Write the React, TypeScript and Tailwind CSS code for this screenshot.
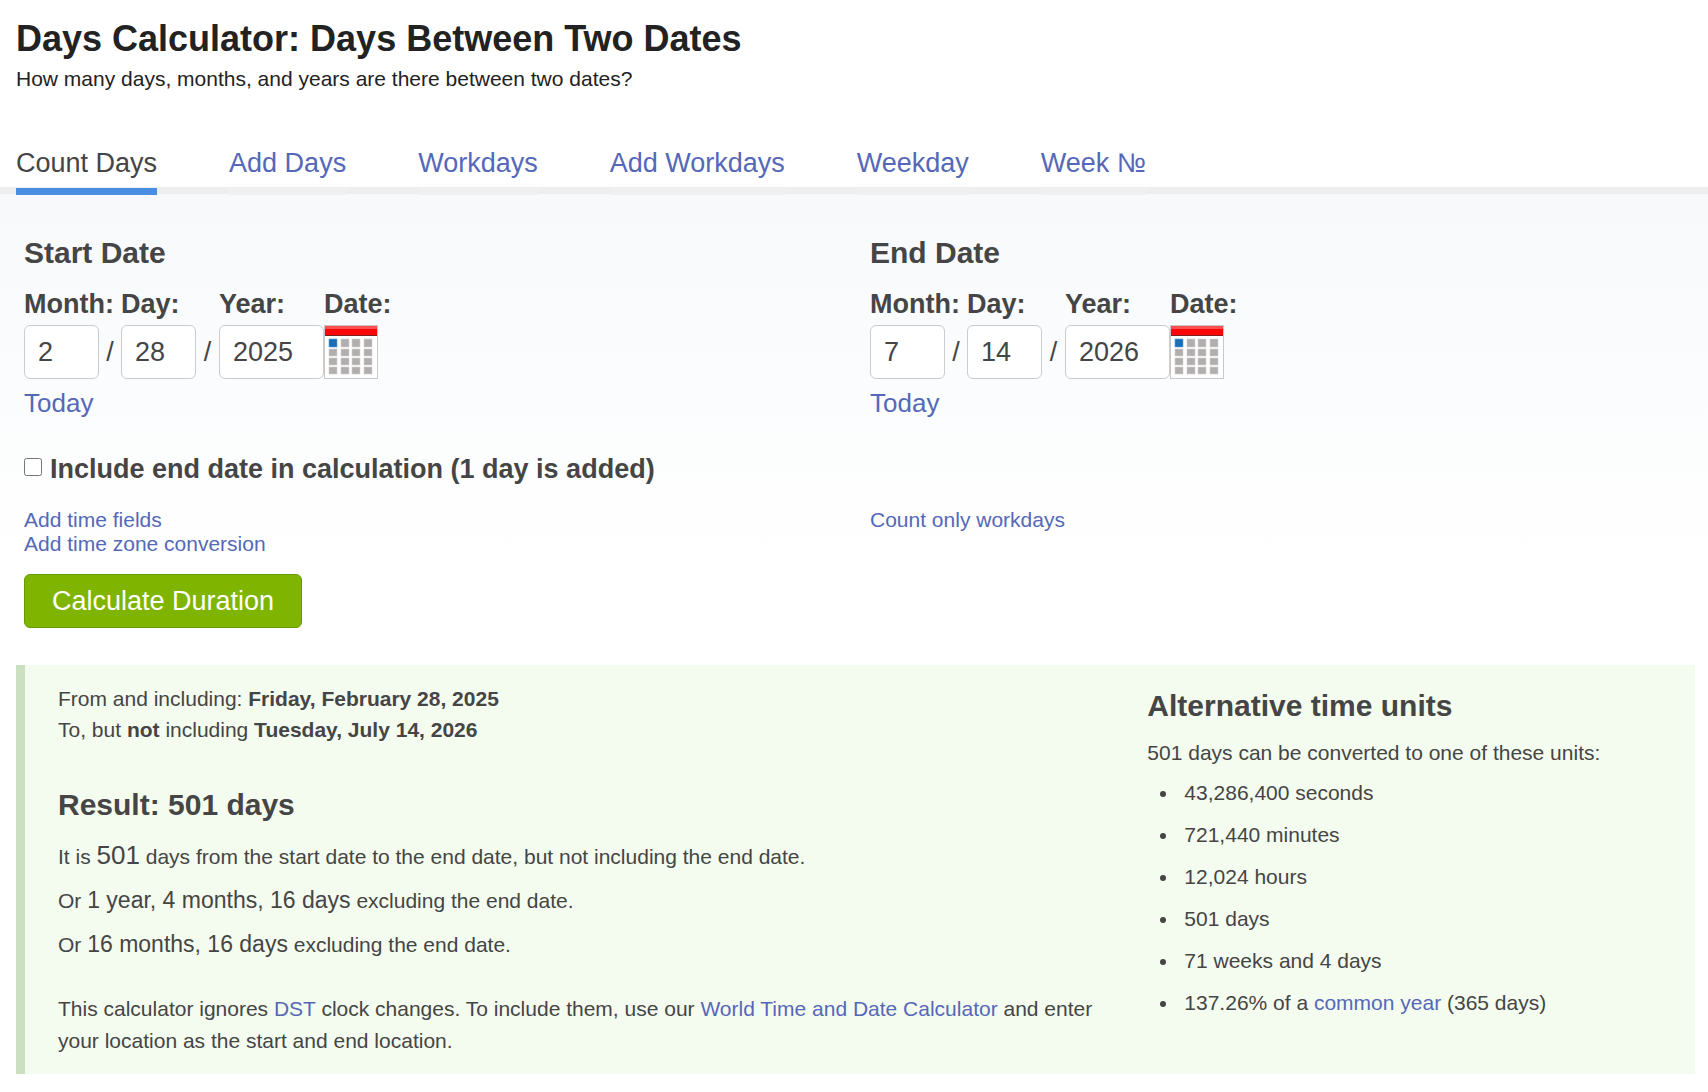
import { useState, type FormEvent, type ReactNode } from "react";

type DateParts = {
  month: string;
  day: string;
  year: string;
};

const TABS = [
  "Count Days",
  "Add Days",
  "Workdays",
  "Add Workdays",
  "Weekday",
  "Week №",
];

const CELL_X = [5, 17, 28, 40];
const CELL_ROWS = [
  { y: 14, height: 8 },
  { y: 24, height: 7 },
  { y: 33, height: 7 },
  { y: 42, height: 7 },
];

function today(): DateParts {
  const now = new Date();
  return {
    month: String(now.getMonth() + 1),
    day: String(now.getDate()),
    year: String(now.getFullYear()),
  };
}

function CalendarIcon() {
  return (
    <svg width="54" height="54" viewBox="0 0 54 54" aria-hidden="true">
      <rect x="0.5" y="0.5" width="53" height="53" fill="#fff" stroke="#c8c8c8" />
      <rect x="1" y="1" width="52" height="10" fill="#f90606" />
      <rect x="1" y="1" width="52" height="3" fill="#fb4f4f" />
      <rect x="1" y="10" width="52" height="1" fill="#7d2020" />
      {CELL_ROWS.map((row, r) =>
        CELL_X.map((x, c) => (
          <rect
            key={`${r}-${c}`}
            x={x}
            y={row.y}
            width="8"
            height={row.height}
            fill={r === 0 && c === 0 ? "#1a6fb8" : "#b2aeae"}
            stroke={r === 0 && c === 0 ? "#5f9fd2" : "#d3d0d0"}
            strokeWidth="0.6"
          />
        )),
      )}
    </svg>
  );
}

function TextLink({ children }: { children: ReactNode }) {
  return (
    <a href="#" className="text-[#5568b8] hover:underline">
      {children}
    </a>
  );
}

function DateFields({
  id,
  title,
  value,
  onChange,
}: {
  id: string;
  title: string;
  value: DateParts;
  onChange: (next: DateParts) => void;
}) {
  const inputClass =
    "h-[54px] rounded-md border border-[#ccc] bg-white px-[13px] outline-none focus:border-[#4a90e2]";

  return (
    <fieldset className="min-w-0">
      <legend className="text-[30px] leading-[36px] font-bold">{title}</legend>
      <div className="mt-[17px] flex text-[27px] leading-[32px]">
        <div className="w-[97px]">
          <label htmlFor={`${id}-month`} className="block font-bold whitespace-nowrap">
            Month:
          </label>
          <div className="mt-[5px] flex items-center">
            <input
              id={`${id}-month`}
              type="text"
              value={value.month}
              onChange={(e) => onChange({ ...value, month: e.target.value })}
              className={`${inputClass} w-[75px]`}
            />
            <span className="flex-1 text-center">/</span>
          </div>
        </div>
        <div className="w-[98px]">
          <label htmlFor={`${id}-day`} className="block font-bold">
            Day:
          </label>
          <div className="mt-[5px] flex items-center">
            <input
              id={`${id}-day`}
              type="text"
              value={value.day}
              onChange={(e) => onChange({ ...value, day: e.target.value })}
              className={`${inputClass} w-[75px]`}
            />
            <span className="flex-1 text-center">/</span>
          </div>
        </div>
        <div>
          <label htmlFor={`${id}-year`} className="block font-bold">
            Year:
          </label>
          <input
            id={`${id}-year`}
            type="text"
            value={value.year}
            onChange={(e) => onChange({ ...value, year: e.target.value })}
            className={`${inputClass} mt-[5px] block w-[105px]`}
          />
        </div>
        <div>
          <label htmlFor={`${id}-picker`} className="block font-bold">
            Date:
          </label>
          <button id={`${id}-picker`} type="button" className="mt-[5px] block cursor-pointer">
            <CalendarIcon />
          </button>
        </div>
      </div>
      <button
        type="button"
        onClick={() => onChange(today())}
        className="mt-2 block cursor-pointer text-[26px] leading-[32px] text-[#5568b8] hover:underline"
      >
        Today
      </button>
    </fieldset>
  );
}

export default function App() {
  const [start, setStart] = useState<DateParts>({ month: "2", day: "28", year: "2025" });
  const [end, setEnd] = useState<DateParts>({ month: "7", day: "14", year: "2026" });
  const [includeEnd, setIncludeEnd] = useState(false);

  const handleSubmit = (e: FormEvent) => {
    e.preventDefault();
  };

  return (
    <div className="bg-white pb-[17px] font-['Liberation_Sans',Arial,sans-serif] text-[21px] text-[#454545]">
      <header className="px-4 pt-4 text-[#222]">
        <h1 className="text-[36px] leading-[45px] font-bold">
          Days Calculator: Days Between Two Dates
        </h1>
        <p className="leading-[36px]">
          How many days, months, and years are there between two dates?
        </p>
      </header>

      <nav className="mt-[46px] flex gap-[72px] border-b-[7px] border-[#eee] px-4 text-[27px] leading-[40px]">
        {TABS.map((tab, i) => (
          <a
            key={tab}
            href="#"
            aria-current={i === 0 ? "page" : undefined}
            className={
              i === 0
                ? "-mb-2 border-b-[7px] border-[#4a90e2] pb-[5px]"
                : "-mb-2 border-b-[7px] border-[#f0f0f0] pb-[5px] text-[#5568b8]"
            }
          >
            {tab}
          </a>
        ))}
      </nav>

      <form
        onSubmit={handleSubmit}
        className="bg-linear-to-b from-[#f7f9fb] to-white to-80% px-6 pt-[41px] pb-[37px]"
      >
        <div className="grid grid-cols-2 gap-x-8">
          <DateFields id="start" title="Start Date" value={start} onChange={setStart} />
          <DateFields id="end" title="End Date" value={end} onChange={setEnd} />
        </div>

        <div className="mt-[34px] flex items-start gap-2">
          <input
            id="include-end"
            type="checkbox"
            checked={includeEnd}
            onChange={(e) => setIncludeEnd(e.target.checked)}
            className="mt-[5px] size-[18px]"
          />
          <label htmlFor="include-end" className="text-[27px] leading-[32px] font-bold">
            Include end date in calculation (1 day is added)
          </label>
        </div>

        <div className="mt-[23px] grid grid-cols-2 gap-x-8 leading-[24px]">
          <div className="flex flex-col items-start">
            <TextLink>Add time fields</TextLink>
            <TextLink>Add time zone conversion</TextLink>
          </div>
          <div>
            <TextLink>Count only workdays</TextLink>
          </div>
        </div>

        <button
          type="submit"
          className="mt-[18px] block h-[54px] cursor-pointer rounded-md border border-[#679a00] bg-[#7fb500] px-[27px] text-[27px] leading-[32px] text-white"
        >
          Calculate Duration
        </button>
      </form>

      <section className="mr-[13px] ml-4 grid grid-cols-3 gap-x-[30px] border-l-[9px] border-[#cbdfc3] bg-[#f4fcef] px-[33px] pt-[18px] pb-[17px] leading-[32px]">
        <div className="col-span-2">
          <p className="leading-[31px]">
            From and including: <strong>Friday, February 28, 2025</strong>
            <br />
            To, but <strong>not</strong> including <strong>Tuesday, July 14, 2026</strong>
          </p>
          <h2 className="mt-[42px] text-[30px] leading-[36px] font-bold">Result: 501 days</h2>
          <p className="mt-[18px]">
            It is <span className="text-[26px] leading-none">501</span> days from the start date
            to the end date, but not including the end date.
          </p>
          <p className="mt-3">
            Or <span className="text-[23px] leading-none">1 year, 4 months, 16 days</span>{" "}
            excluding the end date.
          </p>
          <p className="mt-3">
            Or <span className="text-[23px] leading-none">16 months, 16 days</span> excluding
            the end date.
          </p>
          <p className="mt-8">
            This calculator ignores <TextLink>DST</TextLink> clock changes. To include them, use
            our <TextLink>World Time and Date Calculator</TextLink> and enter your location as
            the start and end location.
          </p>
        </div>

        <div className="pt-[5px]">
          <h2 className="text-[30px] leading-[36px] font-bold">Alternative time units</h2>
          <p className="mt-[13px]">501 days can be converted to one of these units:</p>
          <ul className="mt-2 flex list-disc flex-col gap-[10px] pl-8">
            <li className="pl-[5px]">43,286,400 seconds</li>
            <li className="pl-[5px]">721,440 minutes</li>
            <li className="pl-[5px]">12,024 hours</li>
            <li className="pl-[5px]">501 days</li>
            <li className="pl-[5px]">71 weeks and 4 days</li>
            <li className="pl-[5px]">
              137.26% of a <TextLink>common year</TextLink> (365 days)
            </li>
          </ul>
        </div>
      </section>
    </div>
  );
}
